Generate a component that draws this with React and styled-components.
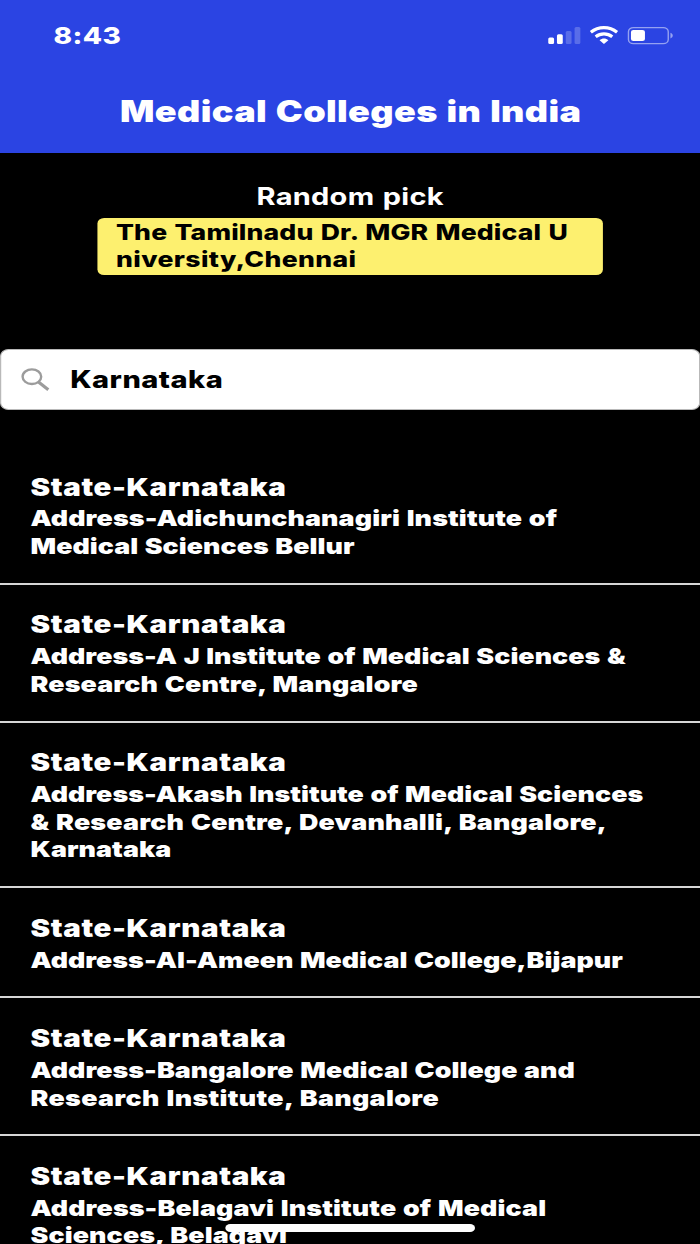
import React, { useLayoutEffect, useRef, useState } from 'react';
import styled, { createGlobalStyle } from 'styled-components';

const STRETCH = 1.218;
const x = (px) => `${(px / STRETCH).toFixed(3)}px`;

const colors = {
    header: '#2b44e3',
    pick: '#fdf06f',
    line: '#d6d6d6',
    icon: '#9c9c9c',
};

const GlobalStyle = createGlobalStyle`
    html, body {
        margin: 0;
        padding: 0;
        background: #000;
        overflow: hidden;
    }
    * { box-sizing: border-box; }
`;

const Screen = styled.div`
    position: relative;
    width: ${x(700)};
    height: 1244px;
    overflow: hidden;
    transform: scaleX(${STRETCH});
    transform-origin: 0 0;
    background: #000;
    color: #fff;
    font-family: Inter, 'Liberation Sans', sans-serif;
`;

const Header = styled.header`
    height: 153px;
    background: ${colors.header};
`;

const StatusBar = styled.div`
    display: flex;
    justify-content: space-between;
    align-items: flex-start;
    height: 71px;
    padding: 20px ${x(26)} 0 ${x(53.5)};
`;

const Time = styled.div`
    padding-top: 1px;
    font-size: 23px;
    font-weight: 800;
    line-height: 31px;
`;

const StatusIcons = styled.svg`
    display: block;
    width: ${x(128)};
    height: 22px;
    margin-top: 5px;
`;

const Title = styled.h1`
    margin: 0;
    padding-left: ${x(120)};
    font-size: 29.6px;
    font-weight: 900;
    line-height: 80px;
`;

const Pick = styled.section`
    display: flex;
    flex-direction: column;
    height: 196px;
    padding: 25.5px ${x(97)} 0;
`;

const PickLabel = styled.div`
    height: 39px;
    padding-left: ${x(159.5)};
    font-size: 23.8px;
    font-weight: 700;
    line-height: 36.5px;
`;

const PickCard = styled.div`
    height: 57px;
    padding: 1px ${x(19)} 0 ${x(19)};
    border-radius: 5.5px;
    background: ${colors.pick};
    color: #000;
    font-size: 21.8px;
    font-weight: 800;
    line-height: 27.8px;
`;

const SearchBar = styled.label`
    display: flex;
    align-items: center;
    height: 61px;
    border: 1.5px solid #b9b9b9;
    border-radius: 7px;
    background: #fff;
    color: #000;
    font-size: 23.8px;
    font-weight: 800;
    line-height: 30px;
`;

const SearchIcon = styled.svg`
    flex: none;
    width: ${x(30)};
    height: 24px;
    margin: 0 ${x(19.5)} 0 ${x(19.5)};
`;

const List = styled.ul`
    margin: 0;
    padding: 37px 0 0;
    list-style: none;
`;

const Item = styled.li`
    padding: 24.6px 0 22.2px ${x(30.5)};
    border-bottom: 2px solid ${colors.line};
`;

const State = styled.div`
    margin-bottom: 2.9px;
    font-size: 24.2px;
    font-weight: 900;
    line-height: 31px;
`;

const Address = styled.div`
    font-size: 22px;
    font-weight: 900;
    line-height: 27.6px;
`;

const HomeIndicator = styled.div`
    position: absolute;
    left: ${x(225)};
    bottom: 12.5px;
    width: ${x(250.5)};
    height: 8px;
    border-radius: 4px;
    background: #fff;
`;

const LineText = styled.span`
    display: block;
    width: max-content;
    white-space: pre;
    word-spacing: 1px;
`;

// One line of text, tracked out so that it fills the given width
const Line = ({ width, children }) => {
    const ref = useRef(null);
    const [spacing, setSpacing] = useState(0);

    useLayoutEffect(() => {
        const natural = ref.current.offsetWidth - spacing * children.length;
        setSpacing((width / STRETCH - natural) / children.length);
    }, [width, children]);

    return <LineText ref={ref} style={{ letterSpacing: spacing }}>{children}</LineText>;
};

const colleges = [
    [['Address-Adichunchanagiri Institute of', 527], ['Medical Sciences Bellur', 323.5]],
    [['Address-A J Institute of Medical Sciences &', 595.5], ['Research Centre, Mangalore', 387.5]],
    [['Address-Akash Institute of Medical Sciences', 612.5], ['& Research Centre, Devanhalli, Bangalore,', 577], ['Karnataka', 140.5]],
    [['Address-Al-Ameen Medical College,Bijapur', 592.5]],
    [['Address-Bangalore Medical College and', 545], ['Research Institute, Bangalore', 408]],
    [['Address-Belagavi Institute of Medical', 516], ['Sciences, Belagavi', 256.5]],
];

const App = () => (
    <Screen>
        <GlobalStyle />
        <Header>
            <StatusBar>
                <Time><Line width={67.5}>8:43</Line></Time>
                <StatusIcons viewBox="0 0 128 22" preserveAspectRatio="none" fill="#fff">
                    <rect x="2.6" y="12.6" width="5.8" height="6.4" rx="1.5" />
                    <rect x="11.3" y="9.2" width="5.8" height="9.8" rx="1.5" />
                    <rect x="20.1" y="6" width="5.8" height="13" rx="1.5" opacity="0.22" />
                    <rect x="28.9" y="2" width="5.8" height="17" rx="1.5" opacity="0.22" />
                    <g fill="none" stroke="#fff" strokeWidth="3.2">
                        <path d="M45.2 7.3C52.8 1.1 63.8 1.1 71.4 7.3" />
                        <path d="M50 11.7C54.9 7.8 61.7 7.8 66.6 11.7" />
                    </g>
                    <path d="M53.9 15.3C56.5 12.9 60.1 12.9 62.7 15.3L58.3 19Z" />
                    <rect x="82.8" y="2.6" width="39.8" height="16" rx="5" ry="4.2" fill="none" stroke="#fff" strokeWidth="1.4" opacity="0.5" />
                    <rect x="85.3" y="5" width="14" height="11" rx="2.5" ry="2" />
                    <path d="M124.8 7.8C127.9 9 127.9 12.2 124.8 13.4Z" opacity="0.5" />
                </StatusIcons>
            </StatusBar>
            <Title><Line width={461}>Medical Colleges in India</Line></Title>
        </Header>
        <Pick>
            <PickLabel><Line width={187}>Random pick</Line></PickLabel>
            <PickCard>
                <Line width={452}>The Tamilnadu Dr. MGR Medical U</Line>
                <Line width={240.5}>niversity,Chennai</Line>
            </PickCard>
        </Pick>
        <SearchBar>
            <SearchIcon viewBox="0 0 30 24" preserveAspectRatio="none" fill="none" stroke={colors.icon}>
                <ellipse cx="11.2" cy="8.7" rx="9.3" ry="7.3" strokeWidth="2.4" />
                <path d="M17.8 14L27.6 21.8" strokeWidth="3.2" />
            </SearchIcon>
            <Line width={153}>Karnataka</Line>
        </SearchBar>
        <List>
            {colleges.map((lines, i) => (
                <Item key={i}>
                    <State><Line width={256.5}>State-Karnataka</Line></State>
                    <Address>
                        {lines.map(([text, width]) => <Line key={text} width={width}>{text}</Line>)}
                    </Address>
                </Item>
            ))}
        </List>
        <HomeIndicator />
    </Screen>
);

export default App;
